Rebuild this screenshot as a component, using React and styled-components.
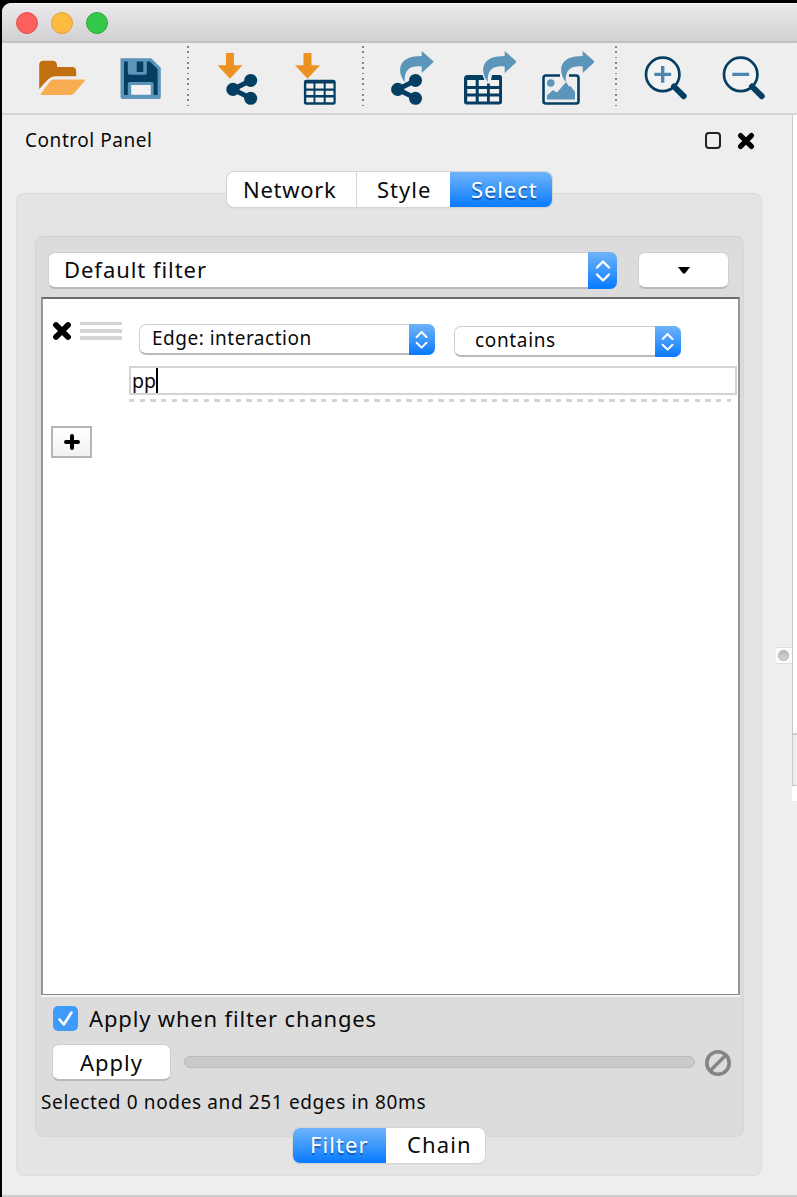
import React from "react";
import styled, { createGlobalStyle, css } from "styled-components";

const navy = "#043f63";
const steel = "#5b95ba";
const orange = "#eb9223";

const GlobalStyle = createGlobalStyle`
  * { box-sizing: border-box; }
  html, body { margin: 0; background: #000; }
  body {
    font-family: "Noto Sans", "Open Sans", sans-serif;
    font-size: 22px;
    color: #0a0a0a;
    overflow: hidden;
  }
  button, input { font: inherit; color: inherit; padding: 0; margin: 0; }
  svg { display: block; flex: none; }
`;

const Desktop = styled.div`
  height: 1197px;
  padding: 3px 0 0 2px;
  background: #000;
  overflow: hidden;
`;

const Window = styled.div`
  display: flex;
  flex-direction: column;
  height: 1194px;
  background: #eee;
  border-top-left-radius: 9px;
  overflow: hidden;
`;

const TitleBar = styled.div`
  flex: none;
  display: flex;
  gap: 13px;
  height: 40px;
  padding: 8px 0 0 14px;
  background: linear-gradient(#ebe9eb, #d2d0d2);
  border-top: 1px solid #f6f5f6;
  border-bottom: 2px solid #c2c0c2;
`;

const Light = styled.span`
  width: 22px;
  height: 22px;
  border-radius: 50%;
  background: ${(p) => p.$fill};
  border: 1px solid ${(p) => p.$edge};
`;

const Toolbar = styled.div`
  flex: none;
  display: flex;
  height: 72px;
  padding: 7px 0 0 32px;
  border-bottom: 2px solid #d4d4d4;
`;

const ToolIcon = styled.svg.attrs({ viewBox: "0 0 56 56", width: 56, height: 56 })`
  margin-left: ${(p) => p.$gap || 0}px;
`;

const ToolDivider = styled.div`
  flex: none;
  width: 2px;
  height: 61px;
  margin: -4px 0 0 ${(p) => p.$gap}px;
  background: repeating-linear-gradient(#858585 0 1.7px, transparent 1.7px 5.33px);
`;

const Workspace = styled.div`
  flex: 1;
  display: flex;
  min-height: 0;
`;

const Dock = styled.div`
  width: 774px;
  padding-left: 14px;
`;

const DockHeader = styled.div`
  display: flex;
  align-items: center;
  height: 50px;
  padding-left: 9px;
  font-size: 19px;
  letter-spacing: 0.55px;
`;

const DockTitle = styled.span`
  width: 680px;
`;

const FloatMark = styled.span`
  width: 16px;
  height: 17px;
  margin-top: 1px;
  border: 2px solid #222;
  border-radius: 4px;
`;

const CloseMark = styled.svg.attrs({ viewBox: "0 0 20 20" })`
  width: ${(p) => p.$size}px;
  height: ${(p) => p.$size}px;
  margin: ${(p) => p.$top || 0}px 0 0 ${(p) => p.$gap || 0}px;
`;

const Tabs = styled.div`
  position: relative;
  z-index: 1;
  display: flex;
  width: ${(p) => p.$width}px;
  height: 35px;
  margin: ${(p) => p.$top}px 0 1px ${(p) => p.$left}px;
  border-radius: 7px;
  box-shadow: 0 0 0 1px #d4d4d4, 0 1px 1px #aaa;
  background: #fff;
`;

const Tab = styled.button`
  width: ${(p) => p.$width}px;
  padding-left: ${(p) => p.$shift || 0}px;
  padding-bottom: ${(p) => p.$lift || 1}px;
  line-height: 30px;
  letter-spacing: ${(p) => p.$track || 1.1}px;
  border: 0;
  border-left: ${(p) => (p.$ruled ? "1px solid #d8d8d8" : "0")};
  background: none;
  white-space: nowrap;
  text-align: left;
  ${(p) =>
    p.$active &&
    css`
      color: #fff;
      background: linear-gradient(#6db3fa, #3d98fb 50%, #067aff);
      text-shadow: 0 2px 1px rgba(0, 50, 110, 0.55);
      border-radius: ${p.$side === "left" ? "7px 0 0 7px" : "0 7px 7px 0"};
    `}
`;

const OuterGroup = styled.div`
  width: 746px;
  height: 983px;
  margin-top: -15px;
  padding: 42px 0 0 18px;
  background: #e4e4e4;
  border: 1px solid #dedede;
  border-top-color: #d8d8d8;
  border-radius: 8px;
`;

const InnerGroup = styled.div`
  width: 709px;
  height: 901px;
  padding: 15px 0 0 5px;
  background: #dcdcdc;
  border: 1px solid #d7d7d7;
  border-top: 1px solid #d0d0d0;
  border-radius: 8px;
`;

const FilterBar = styled.div`
  display: flex;
  gap: 21px;
  height: 36px;
  padding-left: 7px;
`;

const raised = css`
  background: #fff;
  border: 1px solid #cfcfcf;
  border-bottom: 2px solid #b9b9b9;
  border-radius: 7px;
`;

const ComboBox = styled.div`
  ${raised}
  position: relative;
  flex: none;
  width: ${(p) => p.$width}px;
  height: ${(p) => p.$height}px;
  margin: ${(p) => p.$top || 0}px 0 0 ${(p) => p.$gap || 0}px;
  padding-left: ${(p) => p.$inset}px;
  line-height: ${(p) => p.$height - 4}px;
  font-size: ${(p) => p.$font}px;
  letter-spacing: ${(p) => p.$track}px;
  white-space: nowrap;
`;

const Stepper = styled.span`
  position: absolute;
  top: -1px;
  right: -1px;
  bottom: -2px;
  width: ${(p) => p.$width}px;
  display: flex;
  align-items: center;
  justify-content: center;
  background: linear-gradient(#6db3fa, #3d98fb 50%, #067aff);
  border-radius: 0 7px 7px 0;
`;

const PushButton = styled.button`
  ${raised}
  display: flex;
  align-items: center;
  justify-content: center;
  flex: none;
  width: ${(p) => p.$width}px;
  height: 37px;
  letter-spacing: 1px;
  line-height: 34px;
`;

const FilterList = styled.div`
  width: 699px;
  height: 698px;
  margin-top: 9px;
  padding: 25px 0 0 9px;
  background: #fff;
  border: 2px solid #979797;
  border-top-color: #6b6b6b;
  border-bottom: 1px solid #888;
  box-shadow: 0 2px 0 #f5f5f5;
`;

const Condition = styled.div`
  display: flex;
  height: 42px;
`;

const Grip = styled.div`
  flex: none;
  width: 42px;
  height: 18px;
  margin: -2px 1px 0 8px;
  background: repeating-linear-gradient(#d4d4d4 0 3.5px, transparent 3.5px 7.1px);
`;

const ConditionValue = styled.div`
  display: flex;
  align-items: center;
  width: 608px;
  height: 29px;
  margin-left: 77px;
  padding-left: 1px;
  border: 2px solid #d4d4d4;
  font-size: 19.5px;
  line-height: 25px;
`;

const Caret = styled.span`
  width: 2px;
  height: 25px;
  background: #000;
`;

const DropLine = styled.div`
  width: 602px;
  height: 3px;
  margin: 4px 0 0 77px;
  background: repeating-linear-gradient(90deg, #d4d4d4 0 5.4px, transparent 5.4px 10.67px);
`;

const AddButton = styled.button`
  display: flex;
  align-items: center;
  justify-content: center;
  width: 41px;
  height: 32px;
  margin: 24px 0 0 -1px;
  background: linear-gradient(#fff, #f1f1f1);
  border: 2px solid #b5b5b5;
`;

const CheckRow = styled.label`
  display: flex;
  align-items: center;
  gap: 11px;
  height: 26px;
  margin: 10px 0 0 12px;
  letter-spacing: 0.84px;
  white-space: nowrap;
`;

const CheckBox = styled.span`
  display: flex;
  align-items: center;
  justify-content: center;
  width: 25px;
  height: 25px;
  border-radius: 5px;
  background: #3f9bfb;
`;

const ApplyRow = styled.div`
  display: flex;
  align-items: center;
  height: 37px;
  margin: 13px 0 0 11px;
`;

const Progress = styled.div`
  width: 511px;
  height: 12px;
  margin: -2px 9px 0 13px;
  background: #cacaca;
  border: 1px solid #b9b9b9;
  border-radius: 6px;
`;

const Status = styled.div`
  margin: 7px 0 0 0;
  font-size: 19px;
  line-height: 28px;
  letter-spacing: 0.63px;
  white-space: nowrap;
`;

const Splitter = styled.div`
  display: flex;
  width: 16px;
  padding-top: 532px;
`;

const SplitHandle = styled.div`
  width: 16px;
  height: 17px;
  padding: 2px;
  background: #fafafa;
  border-top: 1px solid #ddd;
  border-bottom: 1px solid #ddd;
`;

const SplitKnob = styled.div`
  width: 11px;
  height: 11px;
  border-radius: 50%;
  border: 1px solid #aaa;
  background: linear-gradient(#bbb, #d5d5d5);
`;

const Neighbor = styled.div`
  flex: 1;
  display: flex;
  flex-direction: column;
`;

const Canvas = styled.div`
  height: 618px;
  background: #fff;
  border-left: 1px solid #cacaca;
`;

const TablePane = styled.div`
  height: 53px;
  border: solid #cacaca;
  border-width: 2px 0 1px 1px;
`;

const TableEdge = styled.div`
  height: 15px;
  background: #fff;
`;

const WindowFoot = styled.div`
  flex: none;
  height: 2px;
  background: #cdcdcd;
`;

const DownArrow = ({ x }) => (
  <path transform={`translate(${x} 0)`} fill={orange} d="M8.8 3h8v12.3h8.5L12.8 28.7.3 15.3h8.5z" />
);

const CurvedArrow = ({ x }) => (
  <path
    transform={`translate(${x} 0)`}
    fill={steel}
    d="M37.7 1 49.8 11.7 37.7 23v-6.4C28 15.4 19.8 18.5 20.8 32 17.5 28 15 22 16.6 16.2 18.7 8.8 27 6 37.7 6z"
  />
);

const ShareNodes = ({ x }) => (
  <g transform={`translate(${x} 0)`} fill={navy}>
    <path d="M31.3 30.5 13.7 39.5 31.3 48" fill="none" stroke={navy} strokeWidth="4.8" />
    <circle cx="13.7" cy="39.4" r="6.6" />
    <circle cx="31.5" cy="30.4" r="6.5" />
    <circle cx="31.5" cy="48.3" r="6.5" />
  </g>
);

const Chevrons = ({ scale = 1 }) => (
  <svg width={16 * scale} height={24 * scale} viewBox="0 0 16 24" fill="none" stroke="#fff" strokeWidth="2.4">
    <path d="m2 8.5 6-6 6 6M2 15.5l6 6 6-6" strokeLinecap="round" strokeLinejoin="round" />
  </svg>
);

const Cross = ({ size, gap, top }) => (
  <CloseMark $size={size} $gap={gap} $top={top}>
    <path d="m4 4 12 12M16 4 4 16" stroke="#000" strokeWidth="5.8" strokeLinecap="round" />
  </CloseMark>
);

const Magnifier = ({ gap, plus }) => (
  <ToolIcon $gap={gap} fill="none">
    <circle cx="26.7" cy="24.4" r="16.7" stroke={navy} strokeWidth="2.7" fill="#f3f3f3" />
    <path d="m38 36.5 9.7 9.7" stroke={navy} strokeWidth="6" strokeLinecap="round" />
    <path d={plus ? "M18.3 24.4h16.8M26.7 16v16.8" : "M18.3 24.4h16.8"} stroke="#4c87af" strokeWidth="3.4" />
  </ToolIcon>
);

function MainToolbar() {
  return (
    <Toolbar>
      <ToolIcon>
        <path fill="#c16f10" d="M5.2 39V15q0-4.3 4.3-4.3h9q4.5 0 4.5 5v1.2h15q4.2 0 4.2 4.3v5H22q-5.5 0-9 4.3z" />
        <path fill="#f9ad50" d="M19.5 29.5h31q1.2 0 .3 1.4L40.3 43q-1.8 2-4.5 2H8q-2.3 0-.9-1.8L16 31.5q1.5-2 3.5-2z" />
      </ToolIcon>
      <ToolIcon $gap={22}>
        <path fill={steel} d="M8.5 8.3h30.7l9.6 9.5V47q0 2-2 2H10.3q-1.8 0-1.8-2z" />
        <path fill={navy} d="M12 11.5h3.8v11.2q0 2 2 2h15q2 0 2-2V11.5h3.1l7.7 7.6V45h-4V34q0-2-2-2H17.8q-2 0-2 2v11H12z" />
        <path fill={navy} d="M24.7 11.5h6.6v10.6h-6.6z" />
        <path fill="#f2f2f2" d="M19.2 35h19.5v9.8H19.2z" />
      </ToolIcon>
      <ToolDivider $gap={19} />
      <ToolIcon $gap={21}>
        <DownArrow x={7.2} />
        <ShareNodes x={9.2} />
      </ToolIcon>
      <ToolIcon $gap={22}>
        <DownArrow x={6.7} />
        <rect x="15.9" y="29.7" width="31.8" height="25" rx="2.5" fill={navy} />
        <path
          fill="#f1f1f1"
          d="M18.3 33.5h7.2v5h-7.2zM27.4 33.5h8.3v5h-8.3zM37.7 33.5h7.8v5h-7.8zM18.3 40.7h7.2V45h-7.2zM27.4 40.7h8.3V45h-8.3zM37.7 40.7h7.8V45h-7.8zM18.3 47.5h7.2v4.7h-7.2zM27.4 47.5h8.3v4.7h-8.3zM37.7 47.5h7.8v4.7h-7.8z"
        />
      </ToolIcon>
      <ToolDivider $gap={18} />
      <ToolIcon $gap={20}>
        <CurvedArrow x={0} />
        <ShareNodes x={0} />
      </ToolIcon>
      <ToolIcon $gap={20}>
        <path fill={navy} d="M7.5 25h15l2.5 6h5.8l1.2-6h7.5q2.5 0 2.5 2.5v24.3q0 2.7-2.7 2.7H6.7Q4 54.5 4 51.8V28.500Q4 25 7.500 25z" />
        <path
          fill="#f1f1f1"
          d="M7.2 30h8.5v6H7.2zM18.7 30h6v-4h5.6v10H18.7zM29.8 30h9.3v6H29.8zM7.2 39h8.5v4.6H7.2zM18.7 39h8.3v4.6h-8.3zM29.8 39h9.3v4.6H29.8zM7.2 46.6h8.5v5H7.2zM18.7 46.6h8.3v5h-8.3zM29.8 46.6h9.3v5H29.8z"
        />
        <path fill={navy} d="M27 33.5h2.8v5H27z" />
        <CurvedArrow x={7} />
      </ToolIcon>
      <ToolIcon $gap={22}>
        <path d="M22 25.5H8q-2.5 0-2.5 2.5v23.500q0 2 2.500 2h30q2.500 0 2.500-2V28q0-2.500-2.500-2.500h-7" fill="none" stroke={navy} strokeWidth="2.6" />
        <circle cx="12.8" cy="33" r="3.8" fill={steel} />
        <path fill={steel} d="M9 49.5v-4l6-5.5 4 2.5L28 32l3 4.5 1.5-.5L37 42v7.5z" />
        <CurvedArrow x={7} />
      </ToolIcon>
      <ToolDivider $gap={21} />
      <Magnifier gap={19} plus />
      <Magnifier gap={22} />
    </Toolbar>
  );
}

function FilterPanel() {
  return (
    <InnerGroup>
      <FilterBar>
        <ComboBox $width={569} $height={37} $inset={15} $font={22} $track={0.95}>
          Default filter
          <Stepper $width={29}><Chevrons /></Stepper>
        </ComboBox>
        <PushButton $width={91}>
          <svg width="12" height="7" viewBox="0 0 12 7"><path d="M0 0h12L7 6.5H5z" /></svg>
        </PushButton>
      </FilterBar>
      <FilterList>
        <Condition>
          <Cross size={20} top={-3} />
          <Grip />
          <ComboBox $width={296} $height={31} $gap={16} $inset={12} $font={19} $track={0.5}>
            Edge: interaction
            <Stepper $width={26}><Chevrons scale={0.82} /></Stepper>
          </ComboBox>
          <ComboBox $width={227} $height={31} $top={2} $gap={19} $inset={20} $font={19} $track={0.65}>
            contains
            <Stepper $width={26}><Chevrons scale={0.82} /></Stepper>
          </ComboBox>
        </Condition>
        <ConditionValue>pp<Caret /></ConditionValue>
        <DropLine />
        <AddButton>
          <svg width="16" height="16" viewBox="0 0 16 16"><path d="M8 2v12M2 8h12" stroke="#000" strokeWidth="4" strokeLinecap="round" /></svg>
        </AddButton>
      </FilterList>
      <CheckRow>
        <CheckBox>
          <svg width="17" height="17" viewBox="0 0 17 17"><path d="m2.500 9.500 4.300 5L14.500 2.500" fill="none" stroke="#fff" strokeWidth="2.6" strokeLinecap="round" strokeLinejoin="round" /></svg>
        </CheckBox>
        Apply when filter changes
      </CheckRow>
      <ApplyRow>
        <PushButton $width={119}>Apply</PushButton>
        <Progress />
        <svg width="28" height="28" viewBox="0 0 28 28" fill="none" stroke="#848484">
          <circle cx="14" cy="14" r="11.2" strokeWidth="3.6" />
          <path d="M6.5 21.5l15-15" strokeWidth="3.6" />
        </svg>
      </ApplyRow>
      <Status>Selected 0 nodes and 251 edges in 80ms</Status>
    </InnerGroup>
  );
}

export default function App() {
  return (
    <Desktop>
      <GlobalStyle />
      <Window>
        <TitleBar>
          <Light $fill="#fc605c" $edge="#e2504d" />
          <Light $fill="#fdbc40" $edge="#dea034" />
          <Light $fill="#34c84a" $edge="#27a93a" />
        </TitleBar>
        <MainToolbar />
        <Workspace>
          <Dock>
            <DockHeader>
              <DockTitle>Control Panel</DockTitle>
              <FloatMark />
              <Cross size={18} gap={16} top={2} />
            </DockHeader>
            <Tabs $width={325} $top={7} $left={211}>
              <Tab $width={129} $shift={16} $track={0.7}>Network</Tab>
              <Tab $width={94} $shift={20} $track={1} $ruled>Style</Tab>
              <Tab $width={102} $shift={21} $track={0.9} $active $side="right">Select</Tab>
            </Tabs>
            <OuterGroup>
              <FilterPanel />
              <Tabs $width={192} $top={-9} $left={258}>
                <Tab $width={93} $shift={17} $lift={3} $active $side="left">Filter</Tab>
                <Tab $width={99} $shift={21} $lift={3}>Chain</Tab>
              </Tabs>
            </OuterGroup>
          </Dock>
          <Splitter>
            <SplitHandle><SplitKnob /></SplitHandle>
          </Splitter>
          <Neighbor>
            <Canvas />
            <TablePane />
            <TableEdge />
          </Neighbor>
        </Workspace>
        <WindowFoot />
      </Window>
    </Desktop>
  );
}
